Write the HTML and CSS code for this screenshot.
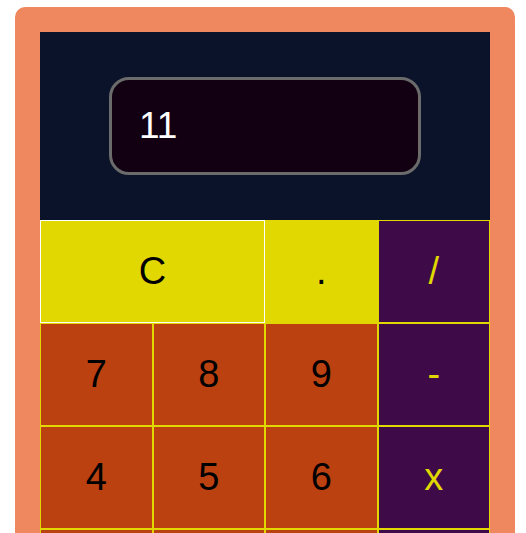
FILE: index.html
```html
<!DOCTYPE html>
<html>
<head>
<meta charset="utf-8">
<link rel="stylesheet" href="styles.css">
</head>
<body>
<div class="calc">
  <div class="screen">
    <div class="display">11</div>
  </div>
  <div class="keys">
    <div class="key clear">C</div>
    <div class="key dot">.</div>
    <div class="key op">/</div>
    <div class="key num">7</div>
    <div class="key num">8</div>
    <div class="key num">9</div>
    <div class="key op">-</div>
    <div class="key num">4</div>
    <div class="key num">5</div>
    <div class="key num">6</div>
    <div class="key op">x</div>
    <div class="key num">1</div>
    <div class="key num">2</div>
    <div class="key num">3</div>
    <div class="key op">+</div>
    <div class="key num zero">0</div>
    <div class="key op">=</div>
  </div>
</div>
</body>
</html>
```
FILE: styles.css
```css
html, body {
  margin: 0;
  padding: 0;
  background: #ffffff;
}
body {
  font-family: "Liberation Sans", Arial, sans-serif;
}
.calc {
  margin: 7px 0 0 15px;
  width: 450px;
  padding: 25px;
  background: #f0885f;
  border-radius: 10px;
}
.screen {
  height: 188px;
  background: #0b132b;
  display: flex;
  align-items: center;
  justify-content: center;
}
.display {
  box-sizing: border-box;
  width: 312px;
  height: 98px;
  border: 3px solid #6b6b6b;
  border-radius: 20px;
  background: #120012;
  color: #ffffff;
  font-size: 37px;
  display: flex;
  align-items: center;
  padding-left: 27px;
}
.keys {
  display: grid;
  grid-template-columns: repeat(4, 1fr);
  grid-auto-rows: 103px;
}
.key {
  box-sizing: border-box;
  border: 1px solid #e0d800;
  display: flex;
  align-items: center;
  justify-content: center;
  font-size: 38px;
  color: #000000;
}
.clear {
  grid-column: span 2;
  background: #e0d800;
  border-color: #ffffff;
}
.dot {
  background: #e0d800;
}
.op {
  background: #3e0b48;
  color: #e0d800;
}
.num {
  background: #bc4111;
}
.zero {
  grid-column: span 3;
}
```
